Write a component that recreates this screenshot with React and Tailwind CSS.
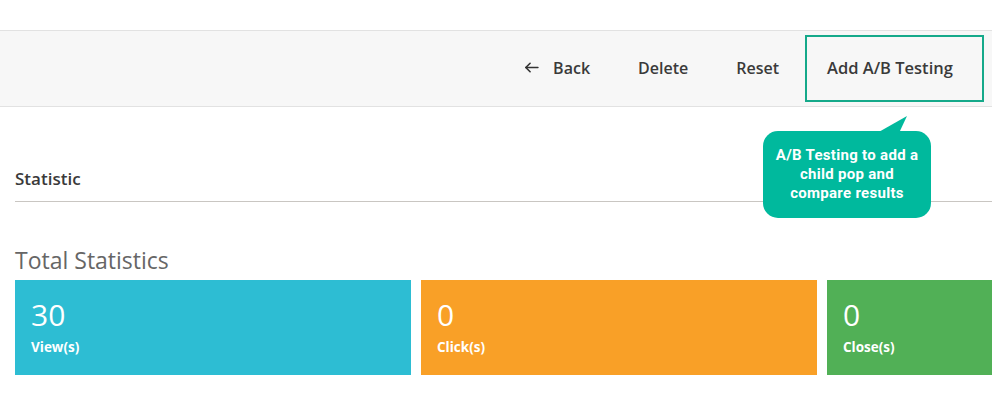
import React from "react";

const stats = [
  { value: 30, label: "View(s)", color: "bg-[#2dbdd3]" },
  { value: 0, label: "Click(s)", color: "bg-[#f9a027]" },
  { value: 0, label: "Close(s)", color: "bg-[#51b056]" },
];

const App = () => {
  return (
    <div className="relative w-[992px] h-[413px] overflow-hidden bg-white font-['Open_Sans',sans-serif] text-[#333]">
      <div className="h-[30px]" />
      {/* toolbar */}
      <div className="flex h-[77px] items-center justify-end border-y border-[#e2e2e2] bg-[#f7f7f7] pr-[8px] pb-[2px]">
        <button className="flex items-center gap-[13px] px-[13px] text-[16px] font-semibold text-[#3a3a3a]">
          <svg width="17" height="17" viewBox="0 0 24 24" fill="none" stroke="#333" strokeWidth="2.3" strokeLinecap="round" strokeLinejoin="round">
            <path d="M21 12H4" />
            <path d="M10 6l-6 6 6 6" />
          </svg>
          Back
        </button>
        <button className="ml-[22px] px-[13px] text-[16px] font-semibold text-[#3a3a3a]">Delete</button>
        <button className="ml-[22px] px-[13px] text-[16px] font-semibold text-[#3a3a3a]">Reset</button>
        <button className="ml-[13px] mt-[2px] flex h-[67px] w-[179px] items-center border-[2px] border-[#15a98a] pl-[20px] text-[16.5px] font-semibold text-[#3a3a3a]">
          Add A/B Testing
        </button>
      </div>

      {/* tooltip */}
      <div className="absolute left-[763px] top-[131px] flex h-[87px] w-[168px] items-center justify-center rounded-[15px] bg-[#00b99d] font-['Roboto',sans-serif] text-[15px] font-bold leading-[19px] tracking-[0.3px] text-white text-center">
        <svg className="absolute left-[114px] top-[-15px]" width="32" height="17" viewBox="0 0 32 17">
          <path d="M0 17 L30 0 L22 17 Z" fill="#00b99d" />
        </svg>
        <span className="relative">
          A/B Testing to add a<br />child pop and<br />compare results
        </span>
      </div>

      <div className="pl-[15px]">
        <div className="mt-[61px] border-b border-[#c9c6c2] pb-[12px] text-[17px] font-semibold leading-[21px] text-[#3a3a3a]">
          Statistic
        </div>
        <h2 className="mt-[43px] text-[23px] font-normal leading-[31px] text-[#666]">Total Statistics</h2>
        <div className="mt-[4px] flex gap-[10px]">
          {stats.map((s) => (
            <div key={s.label} className={`${s.color} h-[95px] w-[396px] shrink-0 px-[16px] pt-[16px] text-white`}>
              <div className="text-[30px] leading-[38px]">{s.value}</div>
              <div className="mt-[4px] text-[13.5px] font-bold leading-[18px]">{s.label}</div>
            </div>
          ))}
        </div>
      </div>
    </div>
  );
};

export default App;
